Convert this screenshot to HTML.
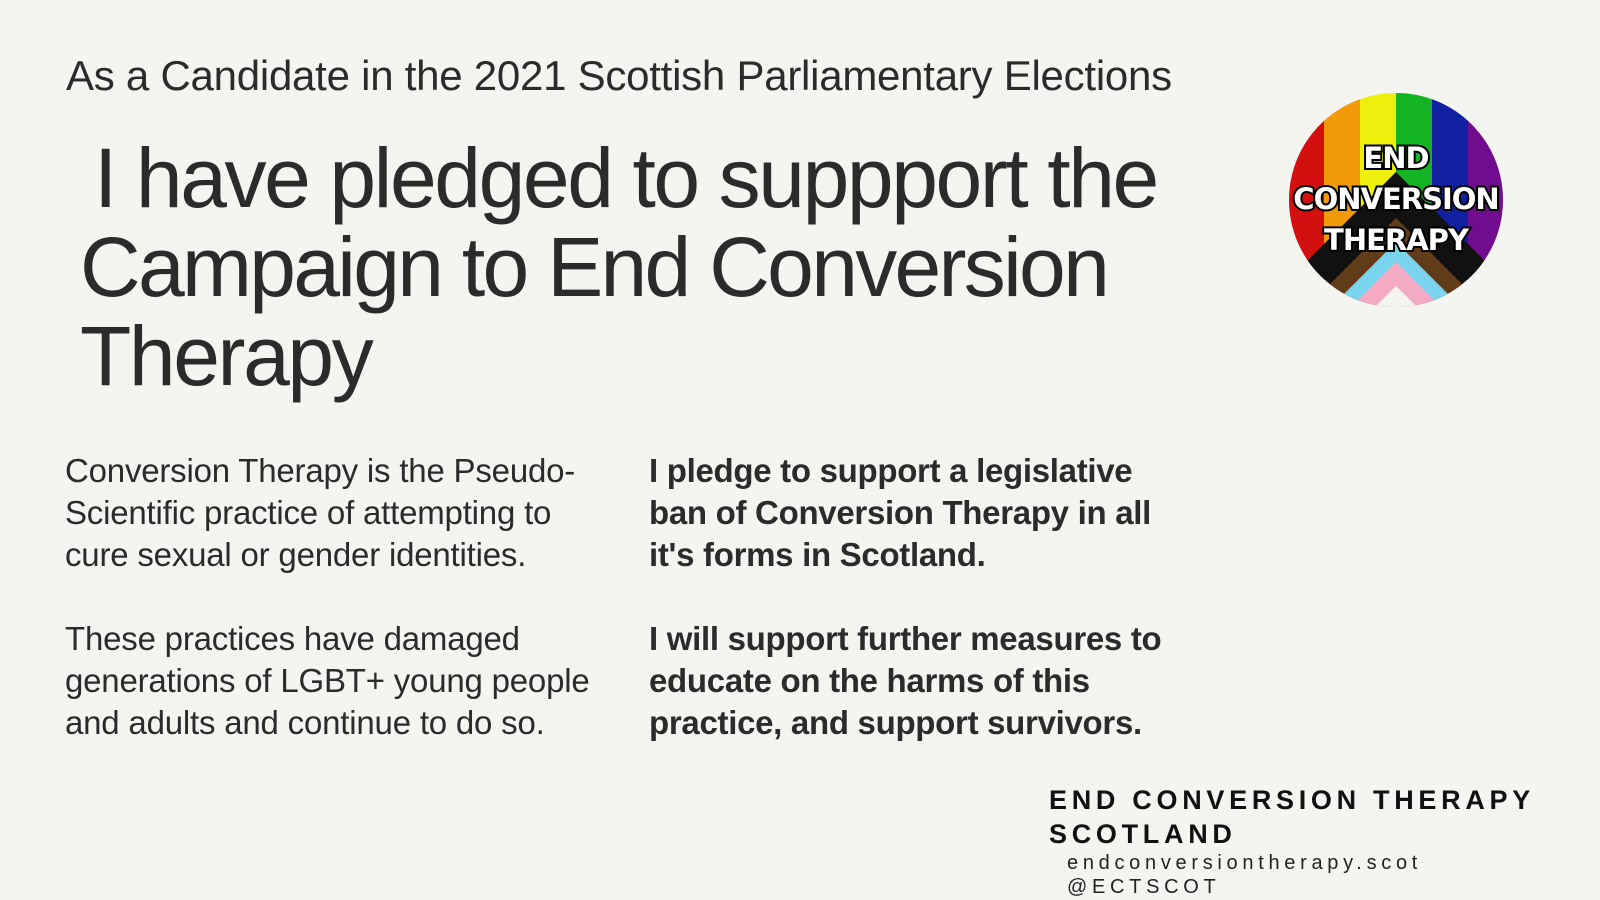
<!DOCTYPE html>
<html><head><meta charset="utf-8"><style>
html,body{margin:0;padding:0}
body{width:1600px;height:900px;background:#f4f4f0;position:relative;overflow:hidden;font-family:"Liberation Sans",sans-serif;color:#2b2b2b}
.a{position:absolute;white-space:nowrap}
.sub{left:66px;top:52px;font-size:42px;letter-spacing:-0.25px}
.big{font-size:84px;letter-spacing:-2.4px;line-height:89px;font-weight:normal}
.body{font-size:33px;letter-spacing:-0.2px;line-height:42px}
.bold{font-weight:bold;letter-spacing:-0.3px}
.f1{font-weight:bold;font-size:27px;letter-spacing:4.7px;color:#111;line-height:34px}
.f2{font-size:20px;letter-spacing:4.7px;color:#222;line-height:24px}
</style></head><body>
<div class="a sub">As a Candidate in the 2021 Scottish Parliamentary Elections</div>
<div class="a big" style="left:94px;top:134px">I have pledged to suppport the</div>
<div class="a big" style="left:80px;top:223px;letter-spacing:-2.7px">Campaign to End Conversion</div>
<div class="a big" style="left:80px;top:312px">Therapy</div>

<div class="a body" style="left:65px;top:450px">Conversion Therapy is the Pseudo-<br>Scientific practice of attempting to<br>cure sexual or gender identities.</div>
<div class="a body" style="left:65px;top:618px">These practices have damaged<br>generations of LGBT+ young people<br>and adults and continue to do so.</div>

<div class="a body bold" style="left:649px;top:450px">I pledge to support a legislative<br>ban of Conversion Therapy in all<br>it's forms in Scotland.</div>
<div class="a body bold" style="left:649px;top:618px">I will support further measures to<br>educate on the harms of this<br>practice, and support survivors.</div>

<div class="a f1" style="left:1049px;top:783px">END CONVERSION THERAPY<br>SCOTLAND</div>
<div class="a f2" style="left:1067px;top:851px">endconversiontherapy.scot<br>@ECTSCOT</div>

<svg class="a" style="left:1288px;top:90px" width="216" height="220" viewBox="0 0 216 220">
<defs><clipPath id="c"><circle cx="108" cy="110" r="107"/></clipPath></defs>
<g clip-path="url(#c)">
<rect x="0" y="0" width="36" height="220" fill="#d40f0f"/>
<rect x="36" y="0" width="36" height="220" fill="#f39a0a"/>
<rect x="72" y="0" width="36" height="220" fill="#eef00c"/>
<rect x="108" y="0" width="36" height="220" fill="#14b424"/>
<rect x="144" y="0" width="36" height="220" fill="#1020a0"/>
<rect x="180" y="0" width="36" height="220" fill="#720c8e"/>
<polygon points="108,82 240,214 -24,214" fill="#111"/>
<polygon points="108,128 200,220 16,220" fill="#633d1a"/>
<polygon points="108,152 180,224 36,224" fill="#7ad4ee"/>
<polygon points="108,172 170,234 46,234" fill="#f5aac4"/>
<polygon points="108,196 140,228 76,228" fill="#f4f4f0"/>
</g>
<g font-family="'DejaVu Sans','Liberation Sans',sans-serif" font-weight="bold" fill="#fff" stroke="#000" stroke-width="4" paint-order="stroke" text-anchor="middle" letter-spacing="-1">
<text x="108" y="78" font-size="29">END</text>
<text x="108" y="119" font-size="29">CONVERSION</text>
<text x="108" y="160" font-size="29">THERAPY</text>
</g>
</svg>
</body></html>
